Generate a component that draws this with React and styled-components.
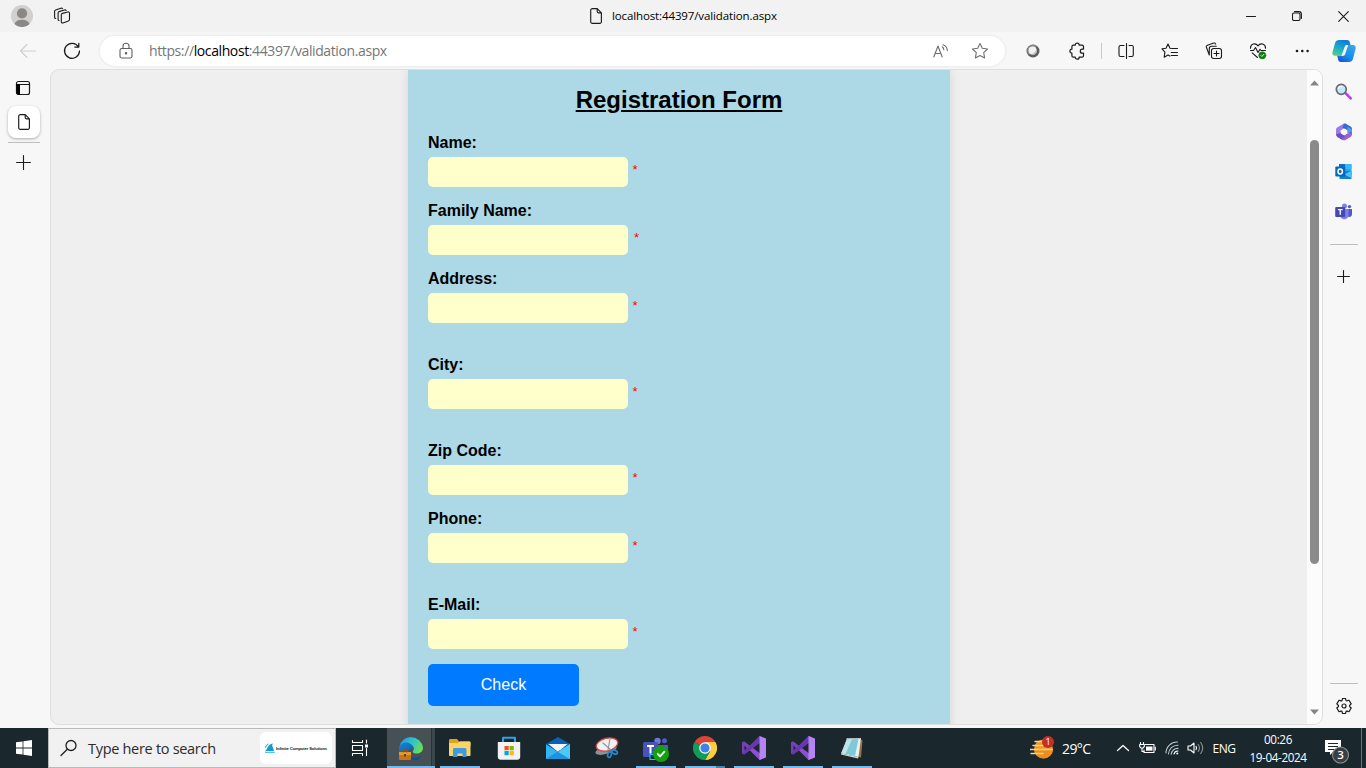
import React from "react";
import styled, { createGlobalStyle } from "styled-components";

const GlobalStyle = createGlobalStyle`
  * { box-sizing: border-box; }
  html, body { margin: 0; padding: 0; }
  body { overflow: hidden; font-family: "Open Sans", "Noto Sans", sans-serif; color: #000; }
  svg { display: block; flex: none; }
`;

const Screen = styled.div`
  display: flex;
  flex-direction: column;
  width: 1366px;
  height: 768px;
  background: #f7f7f7;
  overflow: hidden;
`;

const Slot = styled.div`
  display: flex;
  align-items: center;
  justify-content: center;
  flex: none;
  width: ${(p) => p.$w}px;
  height: ${(p) => (p.$h ? `${p.$h}px` : "100%")};
`;

/* ---------- browser chrome ---------- */
const TitleBar = styled.header`
  display: flex;
  align-items: center;
  height: 32px;
  background: #f2f2f2;
`;

const PageTitle = styled.div`
  display: flex;
  align-items: center;
  justify-content: flex-start;
  gap: 10px;
  flex: 1;
  padding-left: 510px;
  font-size: 11.5px;
  line-height: 16px;
  letter-spacing: -0.12px;
  white-space: nowrap;
`;

const Toolbar = styled.div`
  display: flex;
  align-items: center;
  height: 37px;
  padding-left: 6px;
  background: #f7f7f7;
`;

const AddressBar = styled.div`
  display: flex;
  align-items: center;
  width: 905px;
  height: 30px;
  margin: 1px 6px 0;
  padding: 0 5px 0 6px;
  border-radius: 15px;
  background: #fff;
  box-shadow: 0 0 3px rgba(0, 0, 0, 0.1);
`;

const Url = styled.div`
  flex: 1;
  padding-left: 3px;
  font-size: 14px;
  line-height: 20px;
  letter-spacing: -0.39px;
  color: #767676;
  white-space: nowrap;
  b { font-weight: 400; color: #000; }
`;

const Separator = styled.div`
  width: 1px;
  height: 16px;
  margin: 0 2px;
  background: #c8c8c8;
`;

const Body = styled.div`
  display: flex;
  height: 659px;
`;

const TabRail = styled.nav`
  display: flex;
  flex-direction: column;
  align-items: center;
  width: 50px;
  padding-right: 3px;
`;

const ActiveTab = styled.div`
  display: flex;
  align-items: center;
  justify-content: center;
  width: 32px;
  height: 32px;
  border-radius: 8px;
  background: #fff;
  box-shadow: 0 1px 3px rgba(0, 0, 0, 0.3);
`;

const Rule = styled.div`
  width: ${(p) => p.$w}px;
  height: 1px;
  background: #bdbdbd;
`;

const Viewport = styled.main`
  display: flex;
  width: 1273px;
  height: 656px;
  border: 1px solid #dedede;
  border-radius: 9px;
  background: #efefef;
  overflow: hidden;
`;

const Page = styled.div`
  flex: 1;
  display: flex;
  padding-left: 357px;
  overflow: hidden;
`;

const ScrollTrack = styled.div`
  display: flex;
  flex-direction: column;
  align-items: center;
  width: 15px;
  padding: 10px 0 9px;
  background: #fcfcfc;
`;

const ScrollThumb = styled.div`
  width: 9px;
  height: 424px;
  margin: 54px 0 auto;
  border-radius: 5px;
  background: #8b8b8b;
`;

const Sidebar = styled.aside`
  display: flex;
  flex-direction: column;
  align-items: center;
  width: 41px;
  padding-top: 2px;
`;

const BottomRule = styled(Rule)`
  margin-top: 387px;
`;

/* ---------- form ---------- */
const Form = styled.form`
  width: 542px;
  height: 690px;
  padding: 16px 20px 0;
  background: #add8e6;
  box-shadow: 0 0 10px rgba(0, 0, 0, 0.1);
  font-family: "Liberation Sans", Arial, sans-serif;
`;

const Heading = styled.h2`
  margin: 0 0 20px;
  font-size: 24px;
  line-height: 28px;
  text-align: center;
  text-decoration: underline;
`;

const Field = styled.div`
  margin-bottom: ${(p) => (p.$wide ? 33 : 15)}px;
`;

const Label = styled.label`
  display: block;
  height: 18px;
  margin-bottom: 5px;
  font-size: 16px;
  line-height: 18px;
  font-weight: 700;
`;

const InputRow = styled.div`
  display: flex;
  gap: ${(p) => p.$gap}px;
`;

const Input = styled.input`
  display: block;
  width: 200px;
  height: 30px;
  padding: 5px;
  border: 0;
  border-radius: 5px;
  background: #ffffcc;
  outline: none;
`;

const Required = styled.span`
  padding-top: 5px;
  font-size: 13.3px;
  line-height: 16px;
  color: #ff0000;
`;

const CheckButton = styled.button`
  display: block;
  width: 151px;
  height: 42px;
  padding: 0;
  border: 0;
  border-radius: 5px;
  background: #007bff;
  color: #fff;
  font: 16px "Liberation Sans", Arial, sans-serif;
`;

/* ---------- taskbar ---------- */
const Taskbar = styled.footer`
  display: flex;
  height: 40px;
  background: #1a272c;
  color: #fff;
`;

const SearchBox = styled.div`
  display: flex;
  align-items: center;
  width: 288px;
  border: 1px solid #b9b9b9;
  background: #f1f1f1;
  color: #2b2b2b;
  padding: 0 3px 0 11px;
  font-size: 14.5px;
  letter-spacing: -0.3px;
  white-space: nowrap;
`;

const SearchText = styled.span`
  flex: 1;
  padding-left: 10px;
`;

const SearchBadge = styled.div`
  display: flex;
  align-items: center;
  justify-content: center;
  gap: 1px;
  width: 72px;
  height: 32px;
  border-radius: 6px;
  background: #fff;
  font: bold 4.1px "Liberation Sans", sans-serif;
  letter-spacing: -0.1px;
  color: #111;
`;

const Task = styled.div`
  display: flex;
  flex-direction: column;
  align-items: center;
  width: 48px;
  height: 40px;
  margin-right: 1px;
  padding-top: 8px;
  background: ${(p) => (p.$active ? "linear-gradient(90deg,#475155 44px,#263338 44px,#263338 45px,#3b474b 45px)" : "none")};
`;

const Underline = styled.div`
  width: ${(p) => p.$w}px;
  height: 2px;
  margin-top: auto;
  background: ${(p) => (p.$split ? "linear-gradient(90deg,#76b9ed 31px,#4c81ab 31px)" : "#76b9ed")};
`;

const Tray = styled.div`
  display: flex;
  align-items: center;
  margin-left: auto;
  padding-right: 4px;
  font-size: 12px;
  white-space: nowrap;
`;

const Temp = styled.span`
  width: 53px;
  padding-left: 4px;
  font-size: 14px;
  letter-spacing: -0.6px;
`;

const Language = styled.span`
  width: 34px;
  text-align: center;
  font-size: 12px;
  letter-spacing: -0.55px;
`;

const Clock = styled.div`
  width: 74px;
  text-align: center;
  font-size: 11.7px;
  line-height: 18px;
  letter-spacing: -0.38px;
`;

const DesktopEdge = styled.div`
  width: 1px;
  height: 40px;
  background: #69757a;
`;

/* ---------- icons ---------- */
const Icon = ({ w = 20, h = 20, box, stroke = "#1b1b1b", sw = 1.1, fill = "none", children }) => (
  <svg width={w} height={h} viewBox={box || `0 0 ${w} ${h}`} fill={fill} stroke={stroke} strokeWidth={sw} strokeLinecap="round" strokeLinejoin="round">
    {children}
  </svg>
);

const FileIcon = () => (
  <Icon w={12} h={16} sw={1.15}><path d="M2.3.6h4.9l4.2 4.2v9a1.6 1.6 0 0 1-1.6 1.6H2.3A1.6 1.6 0 0 1 .7 13.8V2.2A1.6 1.6 0 0 1 2.3.6zM7.2.8v2.8a1.2 1.2 0 0 0 1.2 1.2h2.8" /></Icon>
);

const Avatar = () => (
  <Icon w={22} h={22} stroke="none">
    <circle cx="11" cy="11" r="11" fill="#d2d0ce" />
    <circle cx="11" cy="8.4" r="5.1" fill="#8a8886" />
    <path d="M3.4 19a8 6.3 0 0 1 15.2 0A11 11 0 0 1 3.4 19z" fill="#8a8886" />
  </Icon>
);

const Workspaces = () => (
  <Icon w={18} h={18}>
    <path d="M8.8 6.6 14.7 5c1-.3 1.8.2 1.8 1.2v6.4c0 .7-.4 1.200-1.100 1.400L10 15.900c-1 .3-1.700-.2-1.700-1.200V7.800c0-.6.2-1 .5-1.200z" />
    <path d="M6 13.500c-.5 0-.9-.4-.9-1V6c0-.7.4-1.200 1-1.400l5.400-1.600c.7-.2 1.300 0 1.600.5" />
    <path d="M2.700 11.500c-.7 0-1.100-.4-1.100-1V4.300c0-.7.4-1.200 1-1.400l5.200-1.700c.8-.2 1.400 0 1.700.5" />
  </Icon>
);

const Back = () => (
  <Icon w={18} h={16} stroke="#cfcfcf"><path d="M16.500 8H1.500M8 1.500 1.500 8 8 14.500" /></Icon>
);

const Refresh = () => (
  <Icon w={18} h={18} sw={1.25}><path d="M15.300 4.700A7.500 7.500 0 1 0 16.500 9M15.800 1.300v3.800h-4" /></Icon>
);

const Lock = () => (
  <Icon w={14} h={18} stroke="#606060"><rect x="1" y="6.500" width="12" height="9.500" rx="1.800" /><path d="M4 6.500V4.300a3 3 0 0 1 6 0v2.200" /><circle cx="7" cy="11.300" r=".7" fill="#606060" /></Icon>
);

const ReadAloud = () => (
  <Icon w={18} h={18} stroke="#707070"><path d="M2.800 15 7 4l4.200 11M4.200 11.500h5.600M11.300 4.800a4 4 0 0 1 1.500 3M12 2.700a6.500 6.500 0 0 1 4.300 6" /></Icon>
);

const Star = () => (
  <Icon w={18} h={18} stroke="#707070"><path d="m9 1.500 2.300 4.800 5.200.7-3.800 3.700.9 5.200L9 13.400l-4.600 2.500.9-5.200L1.500 7l5.200-.7z" /></Icon>
);

const Ball = () => (
  <Icon w={14} h={14} stroke="none"><circle cx="7" cy="7" r="6.500" fill="#5d5d5d" /><path d="M1.200 6A6 6 0 0 1 11 2.300L3 11A6 6 0 0 1 1.200 6z" fill="#8b8b8b" /><circle cx="6.600" cy="6.600" r="4" fill="#f1f1f1" /><path d="M10.500 5a4 4 0 0 1-6 5c3 .3 5.400-2 6-5z" fill="#bcbcbc" /></Icon>
);

const Puzzle = () => (
  <Icon w={18} h={18} sw={1.2}><path d="M7.200 3.200a2 2 0 0 1 4 0h2.800c.9 0 1.500.6 1.500 1.500v2.500h-1.200a2 2 0 0 0 0 4h1.200v2.500c0 .9-.6 1.500-1.500 1.500h-2.800a2 2 0 0 1-4 0H5.400c-.9 0-1.500-.6-1.500-1.500v-2.500a2 2 0 0 1 0-4V4.700c0-.9.6-1.500 1.500-1.500z" /></Icon>
);

const SplitView = () => (
  <Icon w={16} h={16} sw={1.1}><path d="M8.500 .6v14.800M6 2.500H2.500C1.700 2.500 1 3.200 1 4v8c0 .8.700 1.500 1.500 1.500H6M11 2.500h2.800c.8 0 1.500.7 1.500 1.500v8c0 .8-.7 1.500-1.500 1.500H11" /></Icon>
);

const Favorites = () => (
  <Icon w={18} h={18}><path d="M11.300 6.500 9 6.200 7 1.900 5 6.200l-4 .6 2.900 3.400-.7 5 3.800-2.100 1.900 1M11.300 6.500h5.200M10.300 10.500h6.200M10.300 13.500h6.200" /></Icon>
);

const Collections = () => (
  <Icon w={18} h={18}><rect x="6.500" y="6.500" width="10" height="10" rx="2.200" /><path d="M11.500 9v5M9 11.500h5M4.300 13 1.400 5.300c-.3-.9.100-1.700 1-2l6.300-2.200c.9-.3 1.700.1 2 1M4.300 13V6.500c0-1.500.9-2.300 2.300-2.300h4.700" /></Icon>
);

const Essentials = () => (
  <Icon w={18} h={18}>
    <path d="M1.500 6.300C1.300 1.700 6.500.4 9 3.900c2.500-3.500 7.700-2.200 7.500 2.400M1.500 8.500h3L6.500 5.500l2.500 5 2-3.200 1 1.200h4.500M3.200 10.800 8.500 15.500" />
    <circle cx="13.300" cy="13.300" r="3.600" fill="#107c10" stroke="#107c10" strokeWidth=".5" /><path d="m11.900 13.500 1 1 2-2.200" stroke="#fff" strokeWidth=".9" />
  </Icon>
);

const Dots = () => <Icon w={16} h={6} stroke="none" fill="#1b1b1b"><circle cx="3" cy="3" r="1.300" /><circle cx="8.300" cy="3" r="1.300" /><circle cx="13.600" cy="3" r="1.300" /></Icon>;

const Copilot = () => (
  <Icon w={24} h={24} stroke="none">
    <defs>
      <linearGradient id="cpA" x1=".6" y1="0" x2=".2" y2="1"><stop stopColor="#1679d8" /><stop offset=".45" stopColor="#13a8cf" /><stop offset="1" stopColor="#5ed07d" /></linearGradient>
      <linearGradient id="cpB" x1=".8" y1="0" x2=".2" y2="1"><stop stopColor="#3aa4ee" /><stop offset=".6" stopColor="#168eea" /><stop offset="1" stopColor="#1a50d3" /></linearGradient>
    </defs>
    <path d="M7.500 1H15c2 0 2.500 1.200 3 3l.5 2h-3.200c-1.500 0-2.200.7-2.700 2.200l-1.800 6c-.6 1.800-1.500 2.600-3.500 2.600H3C.8 16.800-.1 15.500.5 13L3 4.200C3.700 2 5 1 7.500 1z" fill="url(#cpA)" />
    <path d="M16.500 23H9c-2 0-2.500-1.200-3-3l-.8-3.200h2.200c2 0 2.900-.8 3.500-2.600l1.900-6C13.300 6.700 14 6 15.500 6H21c2.200 0 3.100 1.500 2.500 4L21 19.800c-.7 2.200-2 3.200-4.500 3.200z" fill="url(#cpB)" />
    <path d="M13 7.500c.4-1 1.200-1.500 2.500-1.500h.7l-2.800 8.500c-.6 1.800-1.500 2.500-3.400 2.500h-.7l1-2.500z" fill="#f7fcff" />
  </Icon>
);

const VerticalTabs = () => (
  <Icon w={18} h={16} sw={1.2}><rect x="1.500" y="1.500" width="13" height="13" rx="2" /><path d="M2 4.500h12.500" /><path d="M1.500 4H5v10.500H3a1.500 1.500 0 0 1-1.500-1.500z" fill="#000" stroke="none" /></Icon>
);

const Plus = ({ s = 15 }) => <Icon w={s} h={s}><path d={`M${s / 2} .6v${s - 1.2}M.6 ${s / 2}h${s - 1.2}`} /></Icon>;

const SearchColor = () => (
  <Icon w={17} h={17} stroke="none"><path d="m10.500 10.200 5.200 5.200" stroke="#b83df0" strokeWidth="2.600" /><circle cx="6.300" cy="6.300" r="5" fill="#c5e8fa" stroke="#666a70" strokeWidth="1.700" /><path d="M3.500 5.500Q4.300 3 7 3.300" stroke="#fff" strokeWidth="1.200" /></Icon>
);

const M365 = () => (
  <Icon w={16} h={18} stroke="none">
    <path d="M8 .5 1.500 4.200C.6 4.800 0 5.600 0 6.700V11l2.500 2.500L8 10.300 4.600 9V7.400L11 3.500z" fill="#9a7be8" />
    <path d="M8 .5c.6-.2 1.300 0 1.900.3L14.500 3.500c1 .6 1.500 1.500 1.500 2.600v4.500l-4.500-1V7.200L6.500 4.500z" fill="#3567d5" />
    <path d="M16 9.500v1.700c0 1.100-.6 2.100-1.500 2.700l-4.700 2.900c-1.200.7-2.500.7-3.700 0L1.500 14C.6 13.400 0 12.400 0 11.500l4.600-1.300L8 12.500l3.500-2.200z" fill="#a060c9" />
    <path d="m11.500 10.200 4.500-1.500V6.300L11.300 3.500z" fill="#4d9cea" /><path d="m0 11.500 4.500-1.700L9 13l-3.500 3.500L1.500 14z" fill="#6c4fc6" /><path d="m8 5.700 3.200 1.700v3L8 12.300l-3.200-1.900v-3z" fill="#f7f7f7" />
  </Icon>
);

const Outlook = () => (
  <Icon w={17} h={17} stroke="none">
    <rect x="4" y="1" width="12.500" height="12" rx="1" fill="#28a8ea" /><path d="M4 1h6v5H4z" fill="#0a70c0" /><path d="M10 1h6.500v5H10z" fill="#35baf3" /><path d="M4.500 8.500 16.500 8v7.200c0 .5-.4.900-1 .9H5.500c-.6 0-1-.4-1-.9z" fill="#137fcf" /><path d="m9 11.500 7.500-3.800V15z" fill="#48c5f7" />
    <rect x=".3" y="3.500" width="10" height="10" rx="1" fill="#0769bd" /><ellipse cx="5.200" cy="8.500" rx="2.200" ry="2.500" stroke="#fff" strokeWidth="1.500" />
  </Icon>
);

const Teams = ({ s = 17 }) => (
  <Icon w={s} h={s} box="0 0 17 17" stroke="none">
    <circle cx="9.500" cy="2.900" r="2.500" fill="#7b83eb" /><circle cx="14.500" cy="3.600" r="1.700" fill="#5059c9" />
    <path d="M12 6h5v5.300a2.700 2.700 0 0 1-4.500 2z" fill="#5059c9" /><path d="M5.500 6h8v6.300a4.200 4.200 0 0 1-8.200 1z" fill="#7b83eb" />
    <rect x=".2" y="4" width="10" height="10" rx="1" fill="#4549b5" /><path d="M3 6.700h4.500M5.250 6.700v5" stroke="#fff" strokeWidth="1.300" strokeLinecap="butt" />
  </Icon>
);

const Gear = () => (
  <Icon w={18} h={18} sw={1.200}>
    <path d="m7.500 1.500-.4 1.800c-.1.500-.7.800-1.200.6L4 3.200 1.800 6.900l1.400 1.300c.4.4.4 1.100 0 1.500l-1.400 1.300L4 14.700l1.800-.6c.6-.2 1.200.1 1.300.7l.4 1.700h3l.4-1.700c.1-.6.7-.9 1.300-.7l1.800.6 2.200-3.700-1.400-1.300c-.4-.4-.4-1.100 0-1.500l1.400-1.300L14 3.200l-1.800.6c-.6.200-1.200-.1-1.300-.6l-.4-1.700z" /><circle cx="9" cy="9" r="2" />
  </Icon>
);

const Triangle = ({ down }) => <Icon w={9} h={6} stroke="none" fill="#858585"><path d={down ? "M0 .5h9L4.500 5.500z" : "M0 5.500h9L4.500.5z"} /></Icon>;

const EdgeWork = () => (
  <Icon w={24} h={24} stroke="none">
    <defs>
      <linearGradient id="edA" x1="0" y1=".2" x2="1" y2=".6"><stop stopColor="#239be5" /><stop offset=".55" stopColor="#35c4c6" /><stop offset="1" stopColor="#6be04c" /></linearGradient>
      <linearGradient id="edB" x1="0" y1="0" x2=".7" y2="1"><stop stopColor="#1883d5" /><stop offset="1" stopColor="#0c4b94" /></linearGradient>
    </defs>
    <path d="M.3 11A12 12 0 0 1 24 11.500c0 4.500-3.500 6-6.500 6-3.500 0-4.300-1.700-3.300-3 1.500-2 .4-5.500-3.700-6.500C6 7 2 8.500.3 11z" fill="url(#edA)" />
    <path d="M.2 12c.3-4 5-6.500 9.500-5 3.300 1 5 3.500 4.600 6-2.500-1.500-4.800 0-4.800 2.700 0 5 7 7.300 13 4.100A12 12 0 0 1 .2 12z" fill="url(#edB)" />
    <rect x="0" y="16" width="12" height="8" rx="1" fill="#c87616" /><path d="M0 16h12v3H0z" fill="#e49a2a" /><path d="M4 16v-1.500h4V16" stroke="#9a4f0b" /><rect x="5" y="18" width="2" height="2.500" fill="#7a3d08" />
  </Icon>
);

const Explorer = () => (
  <Icon w={24} h={24} stroke="none"><path d="M1 4.500C1 3.700 1.500 3 2.300 3H9l2 2.500h10c.8 0 1.500.7 1.500 1.500v3H1z" fill="#e3a21a" /><path d="M1 7h8.500L12 5.500h9.500c.6 0 1 .4 1 1V19c0 .6-.4 1-1 1H2c-.6 0-1-.4-1-1z" fill="#fbd467" /><path d="M5 21v-7.500c0-.8.7-1.500 1.500-1.500H17c.8 0 1.500.7 1.500 1.500V21h-4v-3.500h-5V21z" fill="#3e9be0" /></Icon>
);

const Store = () => (
  <Icon w={24} h={24} stroke="none"><path d="M6 7V1.800h12V7" stroke="#2aa6e8" strokeWidth="2" /><path d="M.8 6h22.400v15c0 1.600-1.200 2.800-2.800 2.800H3.600C2 23.800.8 22.600.8 21z" fill="#f2f2f2" /><path d="M7.500 10h4.200v4.200H7.500z" fill="#f25022" /><path d="M12.600 10h4.200v4.200h-4.200z" fill="#7fba00" /><path d="M7.500 15h4.200v4.200H7.500z" fill="#00a4ef" /><path d="M12.600 15h4.200v4.200h-4.200z" fill="#ffb900" /></Icon>
);

const Mail = () => (
  <Icon w={24} h={24} stroke="none"><path d="M0 8 12 1l12 7v6H0z" fill="#0b62b4" /><path d="M2.500 8h19L12 16z" fill="#f4f6f8" /><path d="M0 8.500 12 16 24 8v15H0z" fill="#35b5ef" /><path d="m0 23 14-9L24 23z" fill="#1c94df" /><path d="m24 8-12 8 12 7z" fill="#4cc8f6" /></Icon>
);

const Snip = () => (
  <Icon w={24} h={24} stroke="none"><ellipse cx="11" cy="14" rx="11" ry="4" fill="#8c9194" transform="rotate(-16 11 14)" /><ellipse cx="12" cy="8.500" rx="11" ry="6.200" fill="#f0f0f0" stroke="#d94644" strokeWidth="1.300" transform="rotate(-14 12 8.500)" /><path d="m8 7 8 7M15 3l-2 11" stroke="#8d9398" /><ellipse cx="14.500" cy="18.500" rx="1.800" ry="3" stroke="#2288d0" strokeWidth="1.700" transform="rotate(15 14.500 18.500)" /><ellipse cx="19.500" cy="16" rx="3" ry="1.800" stroke="#2288d0" strokeWidth="1.700" transform="rotate(25 19.500 16)" /></Icon>
);

const TeamsTask = () => (
  <Icon w={26} h={26} stroke="none">
    <circle cx="14.500" cy="5" r="3.200" fill="#7278d8" /><circle cx="21.500" cy="4.700" r="2.500" fill="#5059c9" /><path d="M13 9h12v8H13z" fill="#5059c9" />
    <rect x="0" y="6" width="15" height="15" rx="1.500" fill="#4952bc" /><path d="M4 10h7M7.500 10v7.500" stroke="#fff" strokeWidth="2" strokeLinecap="butt" /><path d="M7 18.500h6v5H7z" fill="#0a2d37" stroke="#17d1e7" /><circle cx="18" cy="18" r="8" fill="#13a10e" /><path d="m14.800 18 2.300 2.300 4.300-4.600" stroke="#fff" strokeWidth="1.800" />
  </Icon>
);

const Chrome = () => (
  <Icon w={24} h={24} stroke="none"><path d="M12 12 1.600 6A12 12 0 0 1 22.400 6z" fill="#db4437" /><path d="M12 6h10.400A12 12 0 0 1 12 24l5.200-9z" fill="#ffcd40" /><path d="M6.800 15 1.600 6 12 12l5.200 3L12 24A12 12 0 0 1 1.600 6z" fill="#0f9d58" /><circle cx="12" cy="12" r="5.800" fill="#fff" /><circle cx="12" cy="12" r="4.600" fill="#3b82ee" /></Icon>
);

const VisualStudio = () => (
  <Icon w={24} h={24} stroke="none"><path d="M0 6.500 2 5.400 19 18v5.500L17.500 24z" fill="#8b50d0" /><path d="M0 6.500v11l2 1.100L19 6V.5L17.500 0 7.500 10 2 5.400zM2.500 9.500 5 12l-2.500 2.500z" fill="#7440b8" fillRule="evenodd" /><path d="M2.300 18.500 0 17.500 17.500 0 20 .8v4.500z" fill="#6a36ae" /><path d="m17.500 0 6.500 2.500v19L17.500 24z" fill="#b584f3" /></Icon>
);

const Notepad = () => (
  <Icon w={24} h={24} stroke="none"><path d="m20 3 2.500 1.500-1.500 17-3-1z" fill="#947345" /><path d="M7 2.500 21 2l-2.500 19L1 17.500z" fill="#e8f0f1" /><path d="M7 3.500 18.500 3 15 20 2 17z" fill="#7fc8d7" /><path d="m7 3.500 5-.2L5.500 18 2 17z" fill="#bce4ea" /><path d="M1 17.500 18.500 21l-.5 1.500L1 18.500z" fill="#d7d9d8" /><path d="M7 2.500h13" stroke="#b0b6b8" strokeDasharray="1 1.500" /></Icon>
);

const TaskView = () => (
  <Icon w={18} h={18} stroke="#fff" sw={1.100}><path d="M1.500 1.500v2h10v-2M1.500 16.500v-2h10v2M15.500 1v3M15.500 9.500v7" /><path d="M1.500 6.500h10v5h-10z" /><path d="M14 5.500h3v3h-3z" fill="#fff" stroke="none" /></Icon>
);

const Windows = () => <Icon w={16} h={16} stroke="none" fill="#fff"><path d="M0 2.300 6.600 1.400v6.200H0zM7.400 1.300 16 0v7.600H7.400zM0 8.400h6.600v6.200L0 13.700zM7.400 8.400H16V16l-8.600-1.300z" /></Icon>;
const SearchIcon = () => <Icon w={18} h={18} stroke="#222" sw={1.300}><circle cx="11" cy="6.500" r="5" /><path d="M7.300 10.300 1 16.500" /></Icon>;
const Wave = () => <Icon w={10} h={10} stroke="none"><path d="M0 8C3 6.500 2 1 8 .5 6 3 8.500 4 9 8z" fill="#159bd2" /><path d="M0 4.500 3 1M0 9.300h9.500" stroke="#20bac2" /></Icon>;

const Weather = () => (
  <Icon w={26} h={26} stroke="none"><circle cx="13.500" cy="14" r="9.500" fill="#f4981f" /><path d="M4 14h19a9.500 9.500 0 0 1-18 4z" fill="#f18d1c" /><path d="M5 6.500h9M3 10.500h15M0 14.500h22M1 18.500h12" stroke="#f8d58b" strokeWidth="1.500" /><circle cx="18" cy="7" r="6" fill="#c72d29" /><text x="18" y="10.300" textAnchor="middle" fontSize="9" fontFamily="Open Sans" fill="#fff">1</text></Icon>
);

const Battery = () => <Icon w={17} h={14} stroke="#fff"><path d="M6 3.500h9v8H5V9" /><path d="M7 5.500h6.500v4.200H7z" fill="#fff" stroke="none" /><path d="M16.300 6v3M1.500 1.500v2M4.500 1.500v2M.7 3.500h4.600v2.200L4 7H2L.7 5.700zM3 7v3.500h2" /></Icon>;
const Wifi = () => <Icon w={14} h={14} stroke="#bac3c7"><path d="M1 12A11 11 0 0 1 12.500 1M3.500 13A9 9 0 0 1 13 4.200M6.200 13.300A6.500 6.500 0 0 1 13 7.400" /><path d="M9 13a4 4 0 0 1 4-3" stroke="#fff" /><circle cx="12.300" cy="12.500" r="1" fill="#fff" stroke="none" /></Icon>;
const Speaker = () => <Icon w={17} h={14} stroke="#fff"><path d="M1 5h2.500L7 2v10L3.500 9H1zM9 5.300q1 1.700 0 3.400" /><path d="M11.200 3.500q2.500 3.500 0 7M13.700 1.500q4 5.500 0 11" stroke="#87949a" /></Icon>;
const Notice = () => (
  <Icon w={26} h={32} stroke="none"><path d="M0 8h16v12H8l-3 3v-3H0z" fill="#fff" /><path d="M3 11.500h10M3 14.500h10M3 17.500h7" stroke="#1a272c" strokeLinecap="butt" /><circle cx="15.500" cy="23" r="8" fill="#393f42" stroke="#8b9194" /><text x="15.500" y="27" textAnchor="middle" fontSize="11.500" fontFamily="Open Sans" fontWeight="600" fill="#fff">3</text></Icon>
);

const fields = [
  { label: "Name:" },
  { label: "Family Name:", gap: 6 },
  { label: "Address:", wide: true },
  { label: "City:", wide: true },
  { label: "Zip Code:" },
  { label: "Phone:", wide: true },
  { label: "E-Mail:" },
];

const tasks = [
  { icon: <EdgeWork />, active: true },
  { icon: <Explorer />, line: true },
  { icon: <Store /> },
  { icon: <Mail /> },
  { icon: <Snip /> },
  { icon: <TeamsTask />, line: true },
  { icon: <Chrome />, line: true, split: true },
  { icon: <VisualStudio />, line: true },
  { icon: <VisualStudio />, line: true },
  { icon: <Notepad />, line: true },
];

export default function App() {
  return (
    <Screen>
      <GlobalStyle />
      <TitleBar>
        <Slot $w={44}><Avatar /></Slot>
        <Slot $w={36}><Workspaces /></Slot>
        <PageTitle><FileIcon /><span>localhost:44397/validation.aspx</span></PageTitle>
        <Slot $w={46}><Icon w={10} h={10}><path d="M.5 5.500h9" /></Icon></Slot>
        <Slot $w={46}><Icon w={10} h={10}><rect x=".5" y="2" width="7.500" height="7.500" rx="1.500" /><path d="M2.500.6H7c1.500 0 2.400.9 2.400 2.400v4.500" /></Icon></Slot>
        <Slot $w={46}><Icon w={11} h={11}><path d="m.7.7 9.600 9.600M10.300.7.7 10.300" /></Icon></Slot>
      </TitleBar>
      <Toolbar>
        <Slot $w={44}><Back /></Slot>
        <Slot $w={44}><Refresh /></Slot>
        <AddressBar>
          <Slot $w={40}><Lock /></Slot>
          <Url>https://<b>localhost</b>:44397/validation.aspx</Url>
          <Slot $w={40}><ReadAloud /></Slot>
          <Slot $w={40}><Star /></Slot>
        </AddressBar>
        <Slot $w={44}><Ball /></Slot>
        <Slot $w={44}><Puzzle /></Slot>
        <Separator />
        <Slot $w={44}><SplitView /></Slot>
        <Slot $w={44}><Favorites /></Slot>
        <Slot $w={44}><Collections /></Slot>
        <Slot $w={44}><Essentials /></Slot>
        <Slot $w={44}><Dots /></Slot>
        <Slot $w={40}><Copilot /></Slot>
      </Toolbar>
      <Body>
        <TabRail>
          <Slot $w={46} $h={37}><VerticalTabs /></Slot>
          <ActiveTab><FileIcon /></ActiveTab>
          <Slot $w={46} $h={9}><Rule $w={32} /></Slot>
          <Slot $w={46} $h={31}><Plus /></Slot>
        </TabRail>
        <Viewport>
          <Page>
            <Form onSubmit={(e) => e.preventDefault()}>
              <Heading>Registration Form</Heading>
              {fields.map((f) => (
                <Field key={f.label} $wide={f.wide}>
                  <Label>{f.label}</Label>
                  <InputRow $gap={f.gap || 4.6}><Input type="text" /><Required>*</Required></InputRow>
                </Field>
              ))}
              <CheckButton type="submit">Check</CheckButton>
            </Form>
          </Page>
          <ScrollTrack><Triangle /><ScrollThumb /><Triangle down /></ScrollTrack>
        </Viewport>
        <Sidebar>
          <Slot $w={41} $h={41}><SearchColor /></Slot>
          <Slot $w={41} $h={40}><M365 /></Slot>
          <Slot $w={41} $h={39}><Outlook /></Slot>
          <Slot $w={41} $h={41}><Teams /></Slot>
          <Slot $w={41} $h={25}><Rule $w={28} /></Slot>
          <Slot $w={41} $h={39}><Plus s={13} /></Slot>
          <BottomRule $w={28} />
          <Slot $w={41} $h={44}><Gear /></Slot>
        </Sidebar>
      </Body>
      <Taskbar>
        <Slot $w={48}><Windows /></Slot>
        <SearchBox>
          <SearchIcon /><SearchText>Type here to search</SearchText>
          <SearchBadge><Wave />Infinite Computer Solutions</SearchBadge>
        </SearchBox>
        <Slot $w={48}><TaskView /></Slot>
        <Slot $w={3} />
        {tasks.map((t, i) => (
          <Task key={i} $active={t.active}>
            {t.icon}
            {(t.line || t.active) && <Underline $w={t.active ? 48 : 40} $split={t.split} />}
          </Task>
        ))}
        <Tray>
          <Slot $w={30}><Weather /></Slot>
          <Temp>29°C</Temp>
          <Slot $w={24}><Icon w={14} h={10} stroke="#fff" sw={1.300}><path d="m1.500 7.500 5.500-5 5.500 5" /></Icon></Slot>
          <Slot $w={25}><Battery /></Slot>
          <Slot $w={23}><Wifi /></Slot>
          <Slot $w={24}><Speaker /></Slot>
          <Language>ENG</Language>
          <Clock><div>00:26</div><div>19-04-2024</div></Clock>
          <Slot $w={46}><Notice /></Slot>
          <DesktopEdge />
        </Tray>
      </Taskbar>
    </Screen>
  );
}
